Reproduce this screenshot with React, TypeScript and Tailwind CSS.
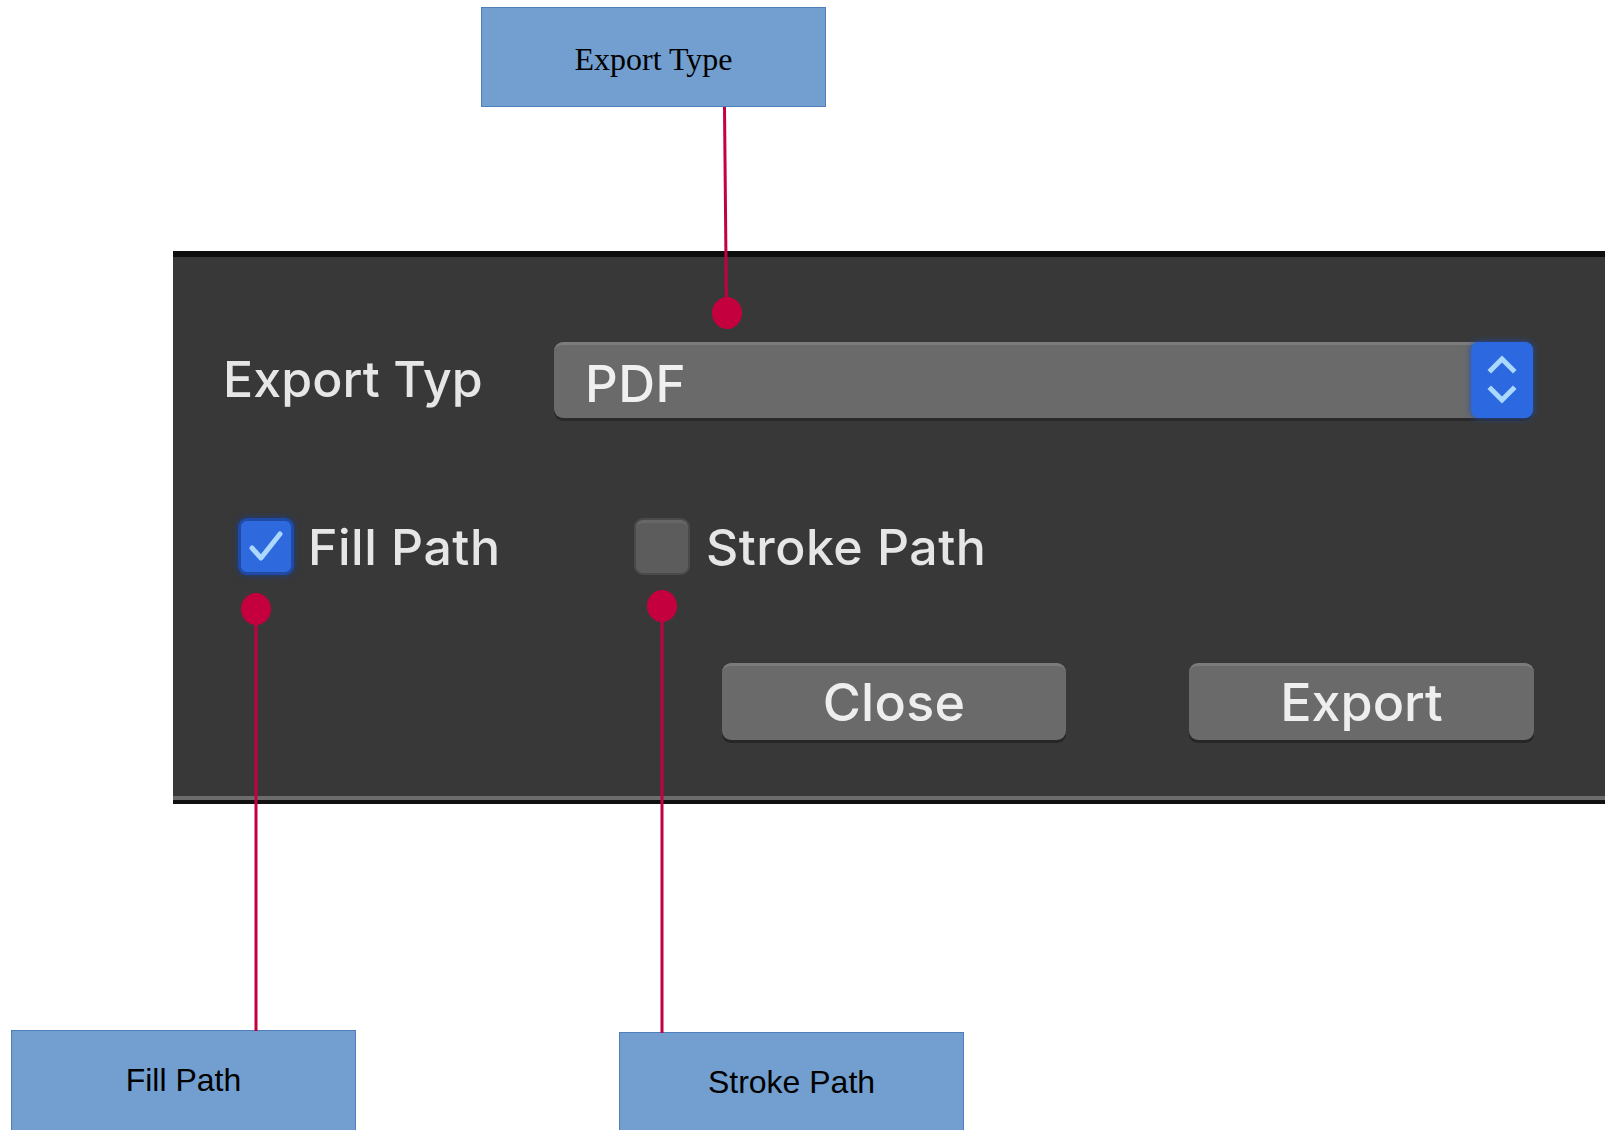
import React from "react";

const sysFont = { fontFamily: "Inter, 'Open Sans', 'Liberation Sans', sans-serif" };

function Callout({ text, serif, className }: { text: string; serif?: boolean; className: string }) {
  return (
    <div
      className={`shrink-0 flex items-center justify-center bg-[#729fcf] border border-[#4f7fb8] w-[345px] text-black ${className}`}
      style={{ fontFamily: serif ? "'Liberation Serif', serif" : "'Liberation Sans', Arial, sans-serif" }}
    >
      <span className="text-[32px] leading-none">{text}</span>
    </div>
  );
}

export default function App() {
  return (
    <div className="relative w-[1605px] h-[1130px] bg-white overflow-hidden flex flex-col">
      {/* top callout */}
      <Callout text="Export Type" serif className="ml-[481px] mt-[7px] h-[100px] pt-[4px]" />

      {/* dialog panel */}
      <div className="shrink-0 ml-[173px] mt-[144px] w-[1432px] flex flex-col" style={sysFont}>
        <div className="shrink-0 h-[6px] bg-[#0e0e0e]" />
        <div className="shrink-0 bg-[#383838] h-[539px] flex flex-col pt-[85px] text-[#e6e6e6] antialiased">
          {/* row 1 */}
          <div className="flex items-center pl-[50px]">
            <div className="w-[331px] text-[50px] font-medium tracking-[0.1px] leading-none pb-[2px]">Export Typ</div>
            <div className="relative w-[979px] h-[76px] rounded-[9px] bg-[#6a6a6a] border-t-[3px] border-[#7d7d7d] shadow-[0_3px_0_#2a2a2a] flex items-center">
              <span className="ml-[31px] mt-[4px] text-[51px] font-medium leading-none tracking-[0.5px] text-[#f0f0f0]">PDF</span>
              <div className="absolute right-0 top-[-3px] h-[76px] w-[62px] rounded-[8px] bg-[#2c68df] shadow-[0_0_6px_#1f4fb0] flex items-center justify-center">
                <svg width="32" height="52" viewBox="0 0 32 52" fill="none">
                  <path d="M5 16 L16 5 L27 16" stroke="#aad8ff" strokeWidth="5" strokeLinecap="square" />
                  <path d="M5 35 L16 46 L27 35" stroke="#aad8ff" strokeWidth="5" strokeLinecap="square" />
                </svg>
              </div>
            </div>
          </div>

          {/* row 2 */}
          <div className="flex items-center pl-[65px] mt-[100px]">
            <div className="flex items-center w-[396px]">
              <div className="w-[56px] h-[57px] rounded-[9px] bg-[#2f69de] border-[3px] border-[#1f4aa6] shadow-[0_0_6px_#1b3f8e] flex items-center justify-center">
                <svg width="40" height="36" viewBox="0 0 40 36" fill="none">
                  <path d="M6 19 L15 29 L34 5" stroke="#aad8ff" strokeWidth="5" strokeLinecap="round" strokeLinejoin="round" />
                </svg>
              </div>
              <span className="ml-[14px] text-[50px] font-medium leading-none tracking-[0.5px]">Fill Path</span>
            </div>
            <div className="flex items-center">
              <div className="w-[56px] h-[57px] rounded-[9px] bg-[#5c5c5c] border-[2px] border-[#4a4a4a] shadow-[inset_0_3px_0_#666]" />
              <span className="ml-[16px] text-[50px] font-medium leading-none tracking-[0.5px]">Stroke Path</span>
            </div>
          </div>

          {/* row 3 */}
          <div className="flex items-center pl-[549px] mt-[88px]">
            <div className="w-[344px] h-[77px] rounded-[9px] bg-[#6a6a6a] border-t-[3px] border-[#7b7b7b] shadow-[0_3px_0_#262626] flex items-center justify-center text-[52px] font-medium leading-none tracking-[0.3px] text-[#eeeeee]">
              Close
            </div>
            <div className="ml-[123px] w-[345px] h-[77px] rounded-[9px] bg-[#6a6a6a] border-t-[3px] border-[#7b7b7b] shadow-[0_3px_0_#262626] flex items-center justify-center text-[52px] font-medium leading-none tracking-[0px] text-[#eeeeee]">
              Export
            </div>
          </div>
        </div>
        <div className="shrink-0 h-[4px] bg-[#6c6c6c]" />
        <div className="shrink-0 h-[4px] bg-[#101010]" />
      </div>

      {/* bottom callouts */}
      <div className="shrink-0 flex items-start mt-[226px]">
        <Callout text="Fill Path" className="ml-[11px] h-[106px] pb-[6px]" />
        <Callout text="Stroke Path" className="ml-[263px] mt-[2px] h-[106px] pb-[6px]" />
      </div>

      {/* connector lines and dots */}
      <svg className="absolute inset-0 pointer-events-none" width="1605" height="1130" viewBox="0 0 1605 1130">
        <line x1="724.5" y1="107" x2="726.5" y2="313" stroke="#c4003f" strokeWidth="3" />
        <ellipse cx="727" cy="313" rx="15" ry="16" fill="#c4003f" />
        <line x1="256" y1="609" x2="256" y2="1031" stroke="#c4003f" strokeWidth="3" />
        <ellipse cx="256" cy="609" rx="15" ry="16" fill="#c4003f" />
        <line x1="662" y1="606" x2="662" y2="1033" stroke="#c4003f" strokeWidth="3" />
        <ellipse cx="662" cy="606" rx="15" ry="16" fill="#c4003f" />
      </svg>
    </div>
  );
}
